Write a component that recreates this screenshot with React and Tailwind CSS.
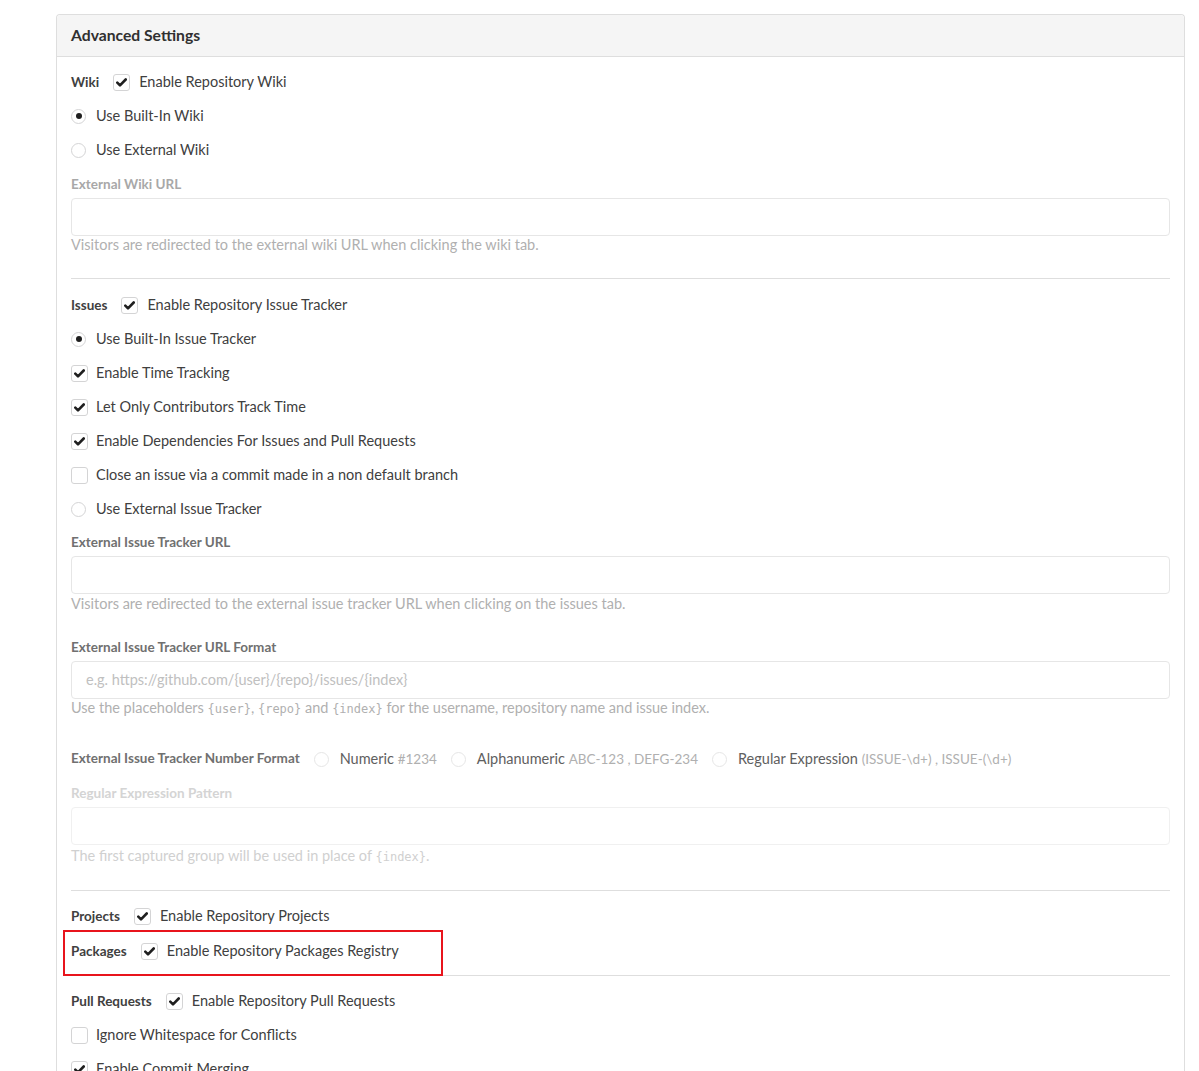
import React from "react";

const FONT = { fontFamily: "Lato, 'Noto Sans', 'Liberation Sans', sans-serif" };

function Check({ checked }) {
  return (
    <span className="inline-flex h-[17px] w-[17px] shrink-0 items-center justify-center rounded-[3px] border border-[#d4d4d5] bg-white">
      {checked && (
        <svg width="11" height="9" viewBox="0 0 11 9">
          <path d="M1.3 4.6 L4 7.3 L9.7 1.5" fill="none" stroke="#1f1f1f" strokeWidth="2.6" strokeLinecap="round" strokeLinejoin="round" />
        </svg>
      )}
    </span>
  );
}

function Radio({ checked, faded }) {
  return (
    <span className={"inline-flex h-[15px] w-[15px] shrink-0 items-center justify-center rounded-full border bg-white " + (faded ? "border-[#e6e6e6]" : "border-[#d4d4d5]")}>
      {checked && <span className="h-[6px] w-[6px] rounded-full bg-[#1f1f1f]" />}
    </span>
  );
}

function Row({ children }) {
  return <div className="flex h-[34px] items-center pt-[2px]">{children}</div>;
}

function CheckRow({ checked, label }) {
  return (
    <Row>
      <Check checked={checked} />
      <span className="ml-[8px] text-[14.5px] text-[#404040]">{label}</span>
    </Row>
  );
}

function RadioRow({ checked, label }) {
  return (
    <Row>
      <span className="flex w-[17px] justify-start"><Radio checked={checked} /></span>
      <span className="ml-[8px] text-[14.5px] text-[#404040]">{label}</span>
    </Row>
  );
}

function SectionRow({ title, label }) {
  return (
    <Row>
      <span className="mr-[14px] mt-[1px] text-[13.5px] font-bold text-[#404040]">{title}</span>
      <Check checked />
      <span className="ml-[9px] text-[14.5px] text-[#404040]">{label}</span>
    </Row>
  );
}

const Code = ({ children }) => (
  <code className="text-[12px]" style={{ fontFamily: "'DejaVu Sans Mono', 'Liberation Mono', monospace" }}>{children}</code>
);

export default function App() {
  return (
    <div className="min-h-[1071px] bg-white pl-[56px] pr-[14px] pt-[14px]" style={FONT}>
      <div className="rounded-t-[4px] border border-b-0 border-[#dedede]">
        <div className="flex h-[42px] items-center rounded-t-[4px] border-b border-[#dedede] bg-[#f5f5f5] pl-[14px]">
          <span className="text-[15.7px] font-bold text-[#303030]">Advanced Settings</span>
        </div>
        <div className="px-[14px] pt-[7px] pb-[20px]">
          <SectionRow title="Wiki" label="Enable Repository Wiki" />
          <RadioRow checked label="Use Built-In Wiki" />
          <RadioRow label="Use External Wiki" />
          <div className="mt-[9px] h-[18px] text-[13.5px] font-bold leading-[18px] text-[#a8a8a8]">External Wiki URL</div>
          <div className="mt-[5px] h-[38px] rounded-[4px] border border-[#e6e6e6]" />
          <div className="mt-[1px] h-[16px] text-[14.5px] leading-[16px] text-[#b0b0b0]">Visitors are redirected to the external wiki URL when clicking the wiki tab.</div>
          <div className="mt-[25px] h-px bg-[#dedede]" />

          <div className="mt-[8px]">
            <SectionRow title="Issues" label="Enable Repository Issue Tracker" />
          </div>
          <RadioRow checked label="Use Built-In Issue Tracker" />
          <CheckRow checked label="Enable Time Tracking" />
          <CheckRow checked label="Let Only Contributors Track Time" />
          <CheckRow checked label="Enable Dependencies For Issues and Pull Requests" />
          <CheckRow label="Close an issue via a commit made in a non default branch" />
          <RadioRow label="Use External Issue Tracker" />

          <div className="mt-[8px] h-[18px] text-[13.5px] font-bold leading-[18px] text-[#707070]">External Issue Tracker URL</div>
          <div className="mt-[5px] h-[38px] rounded-[4px] border border-[#e6e6e6]" />
          <div className="mt-[2px] h-[16px] text-[14.5px] leading-[16px] text-[#b0b0b0]">Visitors are redirected to the external issue tracker URL when clicking on the issues tab.</div>

          <div className="mt-[26px] h-[18px] text-[13.5px] font-bold leading-[18px] text-[#707070]">External Issue Tracker URL Format</div>
          <div className="mt-[5px] flex h-[38px] items-center rounded-[4px] border border-[#e6e6e6] pl-[14px] text-[14.5px] text-[#c0c0c0]">
            e.g. https://github.com/{"{user}"}/{"{repo}"}/issues/{"{index}"}
          </div>
          <div className="mt-[1px] h-[16px] text-[14.5px] leading-[16px] text-[#b0b0b0]">
            Use the placeholders <Code>{"{user}"}</Code>, <Code>{"{repo}"}</Code> and <Code>{"{index}"}</Code> for the username, repository name and issue index.
          </div>

          <div className="mt-[33px] flex h-[20px] items-center text-[14.5px]">
            <span className="mr-[14px] mt-[-2px] text-[13.5px] font-bold text-[#707070]">External Issue Tracker Number Format</span>
            <Radio faded />
            <span className="ml-[11px] mr-[14px] text-[#606060]">Numeric <span className="text-[13.5px] text-[#b0b0b0]">#1234</span></span>
            <Radio faded />
            <span className="ml-[11px] mr-[14px] text-[#606060]">Alphanumeric <span className="text-[13.5px] text-[#b0b0b0]">ABC-123 , DEFG-234</span></span>
            <Radio faded />
            <span className="ml-[11px] text-[#606060]">Regular Expression <span className="text-[13.5px] text-[#b0b0b0]">(ISSUE-\d+) , ISSUE-(\d+)</span></span>
          </div>

          <div className="mt-[15px] h-[18px] text-[13.5px] font-bold leading-[18px] text-[#d4d4d4]">Regular Expression Pattern</div>
          <div className="mt-[5px] h-[38px] rounded-[4px] border border-[#f0f0f0]" />
          <div className="mt-[3px] h-[16px] text-[14.5px] leading-[16px] text-[#d0d0d0]">
            The first captured group will be used in place of <Code>{"{index}"}</Code>.
          </div>
          <div className="mt-[26px] h-px bg-[#dedede]" />

          <div className="mt-[7px]">
            <SectionRow title="Projects" label="Enable Repository Projects" />
          </div>
          <div className="relative mt-[1px]">
            <SectionRow title="Packages" label="Enable Repository Packages Registry" />
            <div className="pointer-events-none absolute left-[-8px] top-[-3px] h-[46px] w-[380px] border-2 border-[#e8141c]" />
          </div>
          <div className="mt-[8px] h-px bg-[#dedede]" />

          <div className="mt-[7px]">
            <SectionRow title="Pull Requests" label="Enable Repository Pull Requests" />
          </div>
          <CheckRow label="Ignore Whitespace for Conflicts" />
          <CheckRow checked label="Enable Commit Merging" />
        </div>
      </div>
    </div>
  );
}
